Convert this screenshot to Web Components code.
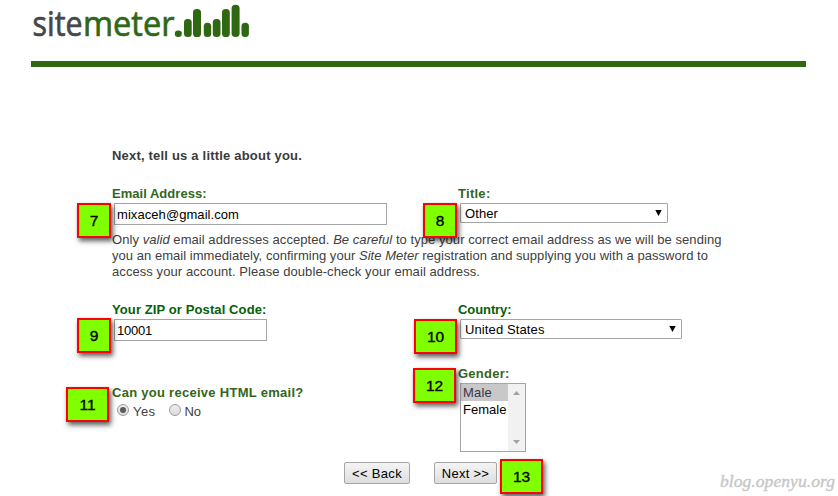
<!DOCTYPE html>
<html lang="en"><head><meta charset="utf-8"><title>Site Meter</title>
<style>html,body{margin:0;background:#fff;overflow:hidden}body{height:496px}</style></head>
<body><sm-page></sm-page>
<script>
const define=(name,html,init)=>customElements.define(name,class extends HTMLElement{
  constructor(){super();const t=document.createElement('template');t.innerHTML=html;
    this.attachShadow({mode:'open'}).append(t.content.cloneNode(true));}
  connectedCallback(){if(init)init.call(this,this.shadowRoot);}
});

/* A single line of text, tracked so that it fills the width given in "w". */
define('sm-line','<style>:host{display:block;white-space:nowrap;width:max-content}span{display:inline-block}</style><span><slot></slot></span>',function(r){
  const s=r.querySelector('span'),w=+this.getAttribute('w');
  if(w){const n=this.textContent.length;s.style.letterSpacing=((w-s.getBoundingClientRect().width)/n)+'px';}
});

define('sm-logo',`<style>:host{display:block;height:61px}svg{display:block;overflow:visible}text{font-family:"Open Sans","Noto Sans",sans-serif}</style>
<svg width="230" height="61" viewBox="31 0 230 61">
<text x="32.5" y="36.4" font-size="34.5" textLength="50" lengthAdjust="spacingAndGlyphs" fill="#47474a" stroke="#47474a" stroke-width=".7">site</text>
<text x="83" y="36.4" font-size="34.5" textLength="91.5" lengthAdjust="spacingAndGlyphs" fill="#306713" stroke="#306713" stroke-width=".7">meter</text>
<g fill="#306713"><rect x="174.8" y="30.5" width="7" height="6.5" rx="3.2"/><rect x="184" y="19" width="7.7" height="18" rx="3.5"/><rect x="193" y="9" width="8" height="28" rx="3.6"/><rect x="203.8" y="22.7" width="7.4" height="14.3" rx="3.5"/><rect x="212.8" y="19" width="7.7" height="18" rx="3.5"/><rect x="222" y="9" width="7.8" height="28" rx="3.6"/><rect x="231.6" y="4.7" width="8" height="32.3" rx="3.7"/><rect x="241.5" y="22.7" width="7.4" height="14.3" rx="3.5"/></g></svg>`);

define('sm-label','<style>:host{display:block;font-weight:bold;color:var(--label,#33661c);height:16px;line-height:16px}</style><slot></slot>');

define('sm-input','<style>:host{display:flex;align-items:center;box-sizing:border-box;height:22px;margin-left:2px;padding-left:2px;border:1px solid #a5a5a5;color:#000;background:#fff}::slotted(*){padding-top:1px}</style><slot></slot>');

define('sm-select','<style>:host{display:flex;align-items:center;justify-content:space-between;box-sizing:border-box;height:20px;margin-left:2px;padding:0 5px 0 4px;border:1px solid #a5a5a5;border-radius:1px;color:#000;background:#fff}svg{display:block;margin-top:-1px}::slotted(*){padding-top:1px}</style><slot></slot><svg width="7" height="6"><path d="M.3 0H6.7L3.5 6Z" fill="#000"/></svg>');

define('sm-radio',`<style>:host{display:flex;align-items:center;gap:4px}i{box-sizing:border-box;width:12px;height:12px;border:1px solid #9a9a9a;border-radius:50%;background:linear-gradient(#eee,#dcdcdc);display:grid;place-items:center;margin-top:-5px}
:host([checked]) i::after{content:"";width:6px;height:6px;border-radius:50%;background:#5a5a5a}</style><i></i><slot></slot>`);

define('sm-listbox',`<style>:host{display:flex;box-sizing:border-box;width:66px;height:69px;margin-left:2px;border:1px solid #a5a5a5;background:#fff;color:#000}
.items{flex:1}.bar{width:17px;background:#f1f1f1;display:flex;flex-direction:column;justify-content:space-between;align-items:center;padding:7px 0;box-sizing:border-box}svg{display:block}
::slotted(*){display:block;height:17px;line-height:17px;padding-left:2px;width:auto!important}::slotted([selected]){background:#c8c8c8;color:#3c3444}</style>
<div class="items"><slot></slot></div><div class="bar"><svg width="7" height="4"><path d="M0 4H7L3.5 0Z" fill="#a3a3a3"/></svg><svg width="7" height="4"><path d="M0 0H7L3.5 4Z" fill="#a3a3a3"/></svg></div>`);

define('sm-button','<style>:host{display:flex;align-items:center;justify-content:center;box-sizing:border-box;height:22px;border:1px solid #a6a6a6;border-radius:2px;color:#000;background:linear-gradient(#f4f4f4,#dedede)}::slotted(*){padding-top:1px}</style><slot></slot>');

define('sm-badge','<style>:host{position:absolute;display:grid;place-items:center;box-sizing:border-box;width:43px;height:35px;border:2px solid #f00;background:#80ff00;box-shadow:2px 3px 5px rgba(0,0,0,.65);color:#000;font:15.5px/18px "Liberation Sans",Arial,sans-serif;-webkit-text-stroke:.35px #000}:host([small]){width:34px}</style><slot></slot>');

define('sm-page',`<style>
:host{display:block;position:relative;width:838px;height:496px;overflow:hidden;font:13px/16px "Liberation Sans",Arial,sans-serif;color:#404040}
header{padding-left:31px}hr{width:775px;height:6px;margin:0;border:0;background:#306713}
main{padding:81px 0 0 112px}
.row{display:grid;grid-template-columns:346px 1fr}
h1{font-size:13px;line-height:16px;margin:0 0 22px;color:#3b3b3b}
.note{margin:7px 0 22px}
.left{padding-top:19px}
.radios{display:flex;gap:13px;padding:3px 0 0 5px}
.actions{display:flex;gap:24px;margin:10px 0 0 232px}
.mark{position:absolute;left:720px;top:471px;font:italic 17.5px/20px "Z003","URW Chancery L","Monotype Corsiva","Apple Chancery","Liberation Serif",serif;color:#c7c7c7;-webkit-text-stroke:.4px #c7c7c7}
</style>
<header><sm-logo></sm-logo><hr></header>
<main>
<h1><sm-line w="190">Next, tell us a little about you.</sm-line></h1>
<section class="row"><div><sm-label><sm-line w="94.5">Email Address:</sm-line></sm-label><sm-input style="width:273px;margin-top:1px"><sm-line w="122">mixaceh@gmail.com</sm-line></sm-input></div>
<div><sm-label><sm-line w="32.5">Title:</sm-line></sm-label><sm-select style="width:208px;margin-top:1px"><sm-line w="33">Other</sm-line></sm-select></div></section>
<section class="note"><sm-line w="609.5">Only <i>valid</i> email addresses accepted. <i>Be careful</i> to type your correct email address as we will be sending</sm-line><sm-line w="596">you an email immediately, confirming your <i>Site Meter</i> registration and supplying you with a password to</sm-line><sm-line w="368">access your account. Please double-check your email address.</sm-line></section>
<section class="row" style="--label:#066006"><div><sm-label><sm-line w="154.5">Your ZIP or Postal Code:</sm-line></sm-label><sm-input style="width:153px;margin-top:1px"><sm-line w="35">10001</sm-line></sm-input></div>
<div><sm-label><sm-line w="53.5">Country:</sm-line></sm-label><sm-select style="width:222px;margin-top:1px"><sm-line w="79.5">United States</sm-line></sm-select></div></section>
<section class="row" style="margin-top:25px"><div class="left"><sm-label><sm-line w="191.5">Can you receive HTML email?</sm-line></sm-label><div class="radios"><sm-radio checked><sm-line w="22.5">Yes</sm-line></sm-radio><sm-radio><sm-line w="16.5">No</sm-line></sm-radio></div></div>
<div><sm-label><sm-line w="51.5">Gender:</sm-line></sm-label><sm-listbox style="margin-top:1px"><sm-line selected w="29">Male</sm-line><sm-line w="43.5">Female</sm-line></sm-listbox></div></section>
<section class="actions"><sm-button style="width:66px"><sm-line w="50">&lt;&lt; Back</sm-line></sm-button><sm-button style="width:63px"><sm-line w="47.5">Next &gt;&gt;</sm-line></sm-button></section>
</main>
<sm-badge small style="left:77px;top:203px">7</sm-badge><sm-badge small style="left:423px;top:203px">8</sm-badge><sm-badge small style="left:77px;top:318px">9</sm-badge><sm-badge style="left:414px;top:319px">10</sm-badge><sm-badge style="left:66px;top:387px">11</sm-badge><sm-badge style="left:413px;top:368px">12</sm-badge><sm-badge style="left:500px;top:459px">13</sm-badge>
<sm-line class="mark" w="115">blog.openyu.org</sm-line>`);
</script></body></html>
